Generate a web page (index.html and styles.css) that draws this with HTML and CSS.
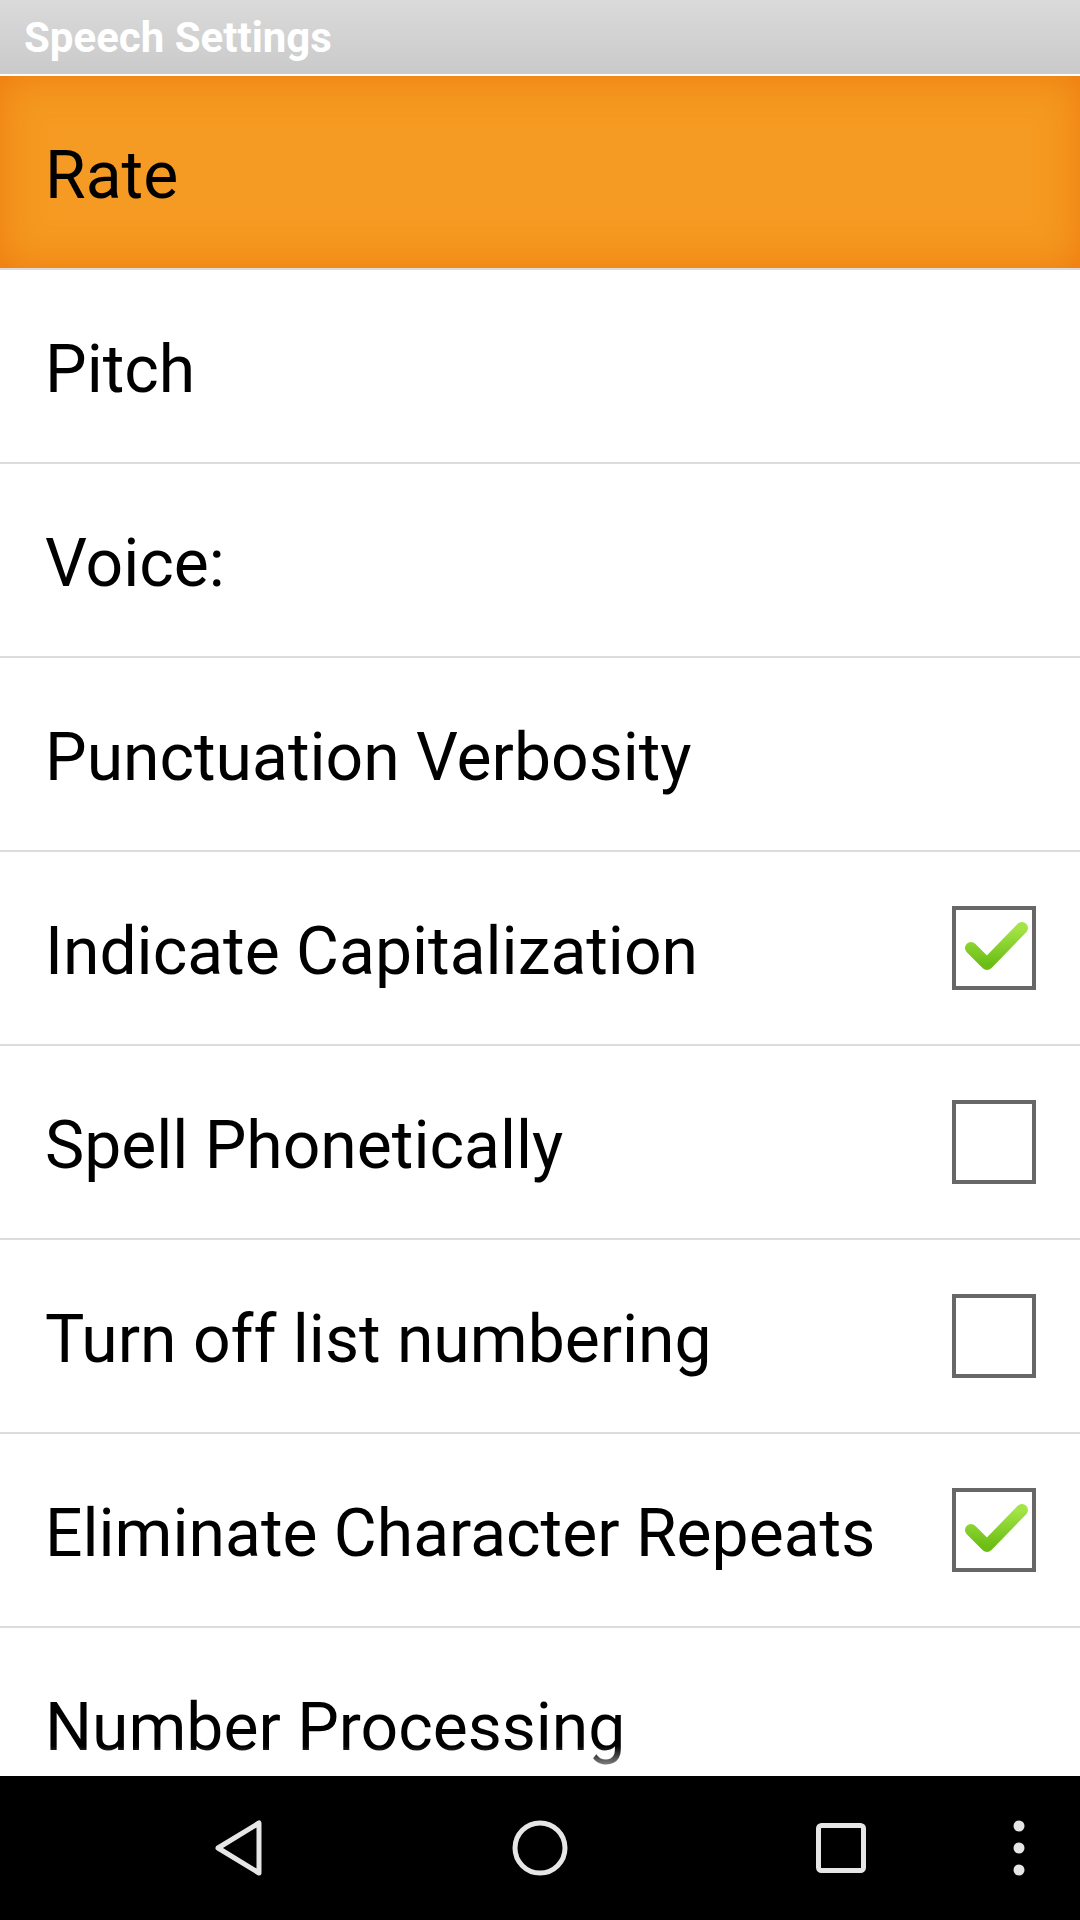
FILE: index.html
```html
<!DOCTYPE html>
<html>

<head>
  <meta charset="utf-8">
  <meta name="viewport" content="width=device-width">
  <title>Speech Settings</title>
  <link rel="stylesheet" href="styles.css">
</head>

<body>
  <main class="screen">
    <header class="title-bar">Speech Settings</header>
    <section class="list">
      <div class="row active"><span class="label">Rate</span></div>
      <div class="row"><span class="label">Pitch</span></div>
      <div class="row"><span class="label">Voice:</span></div>
      <div class="row"><span class="label">Punctuation Verbosity</span></div>
      <div class="row">
        <span class="label">Indicate Capitalization</span>
        <svg class="check" viewBox="0 0 84 84">
          <rect x="2" y="2" width="80" height="80" fill="#fff" stroke="#676767" stroke-width="4" />
          <path d="M19 42 L35 58 L70 22" fill="none" stroke="url(#g1)" stroke-width="12" stroke-linecap="round" stroke-linejoin="round" />
          <defs>
            <linearGradient id="g1" x1="0" y1="0" x2="0" y2="1">
              <stop offset="0" stop-color="#a4e447" />
              <stop offset="1" stop-color="#6cbe16" />
            </linearGradient>
          </defs>
        </svg>
      </div>
      <div class="row">
        <span class="label">Spell Phonetically</span>
        <svg class="check" viewBox="0 0 84 84">
          <rect x="2" y="2" width="80" height="80" fill="#fff" stroke="#676767" stroke-width="4" />
        </svg>
      </div>
      <div class="row">
        <span class="label">Turn off list numbering</span>
        <svg class="check" viewBox="0 0 84 84">
          <rect x="2" y="2" width="80" height="80" fill="#fff" stroke="#676767" stroke-width="4" />
        </svg>
      </div>
      <div class="row">
        <span class="label">Eliminate Character Repeats</span>
        <svg class="check" viewBox="0 0 84 84">
          <rect x="2" y="2" width="80" height="80" fill="#fff" stroke="#676767" stroke-width="4" />
          <path d="M19 42 L35 58 L70 22" fill="none" stroke="url(#g2)" stroke-width="12" stroke-linecap="round" stroke-linejoin="round" />
          <defs>
            <linearGradient id="g2" x1="0" y1="0" x2="0" y2="1">
              <stop offset="0" stop-color="#a4e447" />
              <stop offset="1" stop-color="#6cbe16" />
            </linearGradient>
          </defs>
        </svg>
      </div>
      <div class="row"><span class="label">Number Processing</span></div>
      <div class="fade"></div>
    </section>
    <nav class="nav-bar">
      <svg class="nav-back" viewBox="0 0 48 56">
        <path d="M44 3 L44 53 L3 28 Z" fill="none" stroke="#e6e6e6" stroke-width="5" stroke-linejoin="round" />
      </svg>
      <svg class="nav-home" viewBox="0 0 56 56">
        <circle cx="28" cy="28" r="25" fill="none" stroke="#e6e6e6" stroke-width="5" />
      </svg>
      <svg class="nav-recent" viewBox="0 0 50 50">
        <rect x="2.5" y="2.5" width="45" height="45" rx="3" fill="none" stroke="#e6e6e6" stroke-width="5" />
      </svg>
      <svg class="nav-menu" viewBox="0 0 12 56">
        <circle cx="6" cy="6" r="5.5" fill="#e6e6e6" />
        <circle cx="6" cy="28" r="5.5" fill="#e6e6e6" />
        <circle cx="6" cy="50" r="5.5" fill="#e6e6e6" />
      </svg>
    </nav>
  </main>
</body>

</html>
```

FILE: styles.css
```css
html,
body {
  margin: 0;
  width: 100%;
  height: 100%;
}

body {
  background: #fff;
  font-family: Roboto, "Noto Sans", sans-serif;
}

.screen {
  width: 1080px;
  height: 1920px;
  display: flex;
  flex-direction: column;
  overflow: hidden;
}

.title-bar {
  height: 74px;
  border-bottom: 2px solid #fff;
  background: linear-gradient(#dadada, #cacaca);
  color: #fff;
  font-weight: bold;
  font-size: 42px;
  line-height: 76px;
  padding-left: 24px;
  flex: none;
}

.list {
  flex: 1;
  overflow: hidden;
  position: relative;
}

.row {
  height: 192px;
  border-bottom: 2px solid #dcdcdc;
  display: flex;
  align-items: center;
  justify-content: space-between;
  padding: 0 44px 0 45px;
}

.row.active {
  background: #f59a22;
  box-shadow: inset 0 0 40px rgba(236, 116, 8, 0.85);
}

.label {
  font-size: 66px;
  color: #000;
  position: relative;
  top: 3px;
}

.check {
  width: 84px;
  height: 84px;
  flex: none;
  filter: blur(0.6px);
}

/* list fading edge */
.fade {
  position: absolute;
  left: 0;
  right: 0;
  bottom: 0;
  height: 30px;
  background: linear-gradient(rgba(255, 255, 255, 0), rgba(255, 255, 255, 0.8));
}

.nav-bar {
  height: 144px;
  flex: none;
  background: #000;
  display: flex;
  align-items: center;
  position: relative;
}

.nav-back {
  width: 48px;
  height: 56px;
  margin-left: 215px;
}

.nav-home {
  width: 56px;
  height: 56px;
  margin-left: 249px;
}

.nav-recent {
  width: 50px;
  height: 50px;
  margin-left: 248px;
}

.nav-menu {
  width: 12px;
  height: 56px;
  margin-left: 147px;
}
```
